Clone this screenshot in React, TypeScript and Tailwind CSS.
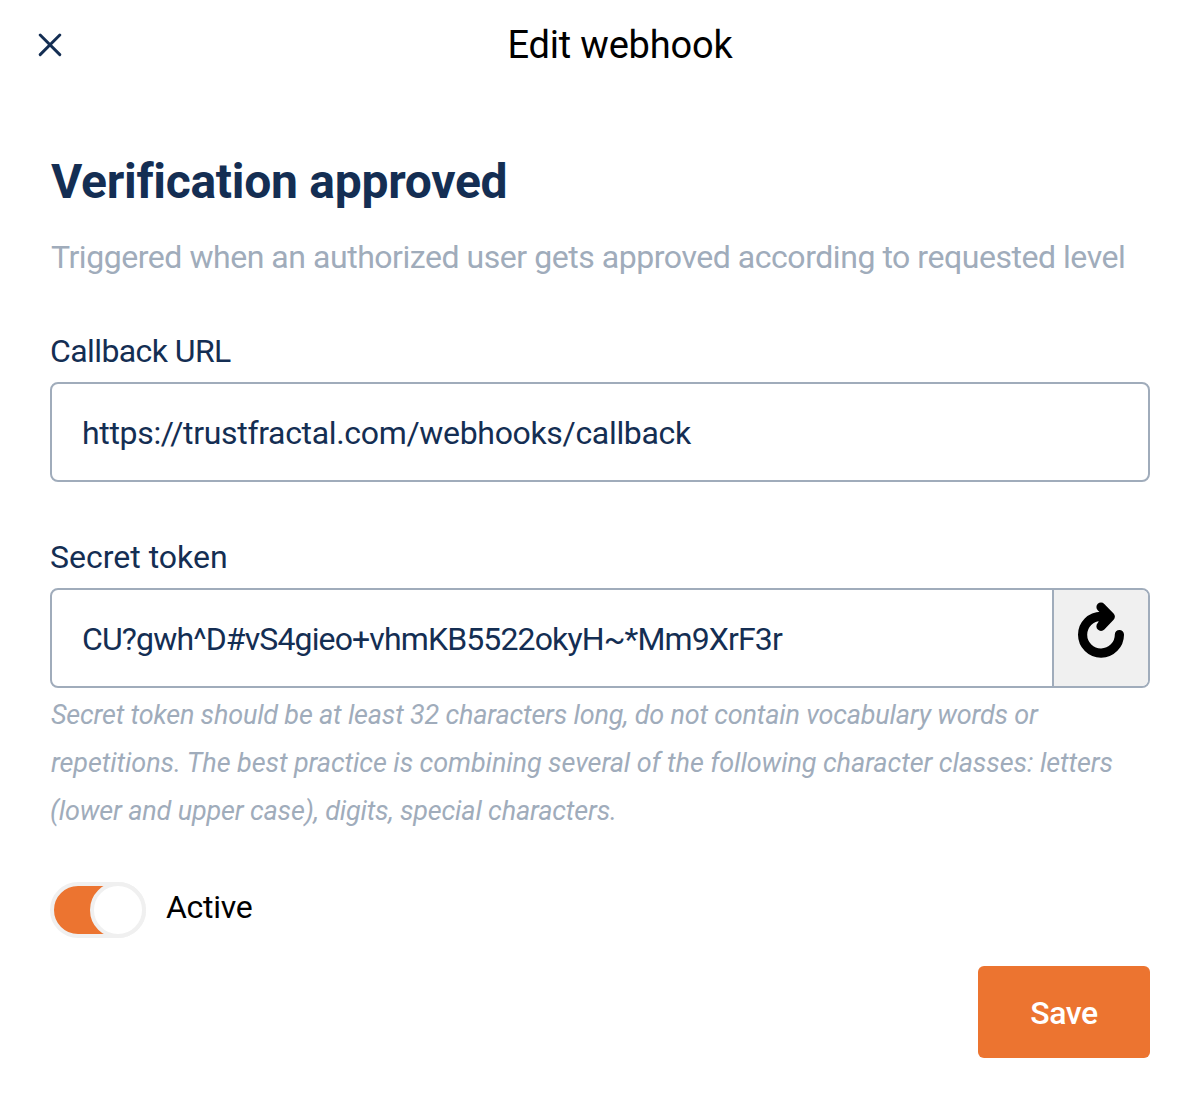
import { useState } from 'react';

function CloseIcon() {
  return (
    <svg viewBox="0 0 24 24" className="size-6" fill="none" stroke="currentColor" strokeWidth="2.9" strokeLinecap="round">
      <path d="M2.2 2 21.8 21.6M21.8 2 2.2 21.6" />
    </svg>
  );
}

function RefreshIcon() {
  return (
    <svg viewBox="0 0 46 56" className="h-14 w-[46px]" fill="none" stroke="black" strokeWidth="9.2" strokeLinecap="round" strokeLinejoin="round">
      <path d="M41.4 32.5A18.4 18.4 0 1 1 23 14.3H31" />
      <path d="M23 5.1 32.3 14.6 23 24.3" />
      <path d="M22 14.5H30L22 22Z" fill="black" strokeWidth="3" />
    </svg>
  );
}

export default function App() {
  const [url, setUrl] = useState('https://trustfractal.com/webhooks/callback');
  const [token, setToken] = useState('CU?gwh^D#vS4gieo+vhmKB5522okyH~*Mm9XrF3r');
  const [active, setActive] = useState(true);

  return (
    <div className="h-[1102px] w-[1194px] overflow-hidden bg-white font-['Roboto',sans-serif] text-[32px] text-[#142E53]">
      <header className="flex h-[90px] items-center pr-4 pl-[38px]">
        <button aria-label="Close">
          <CloseIcon />
        </button>
        <h1 className="flex-1 text-center text-[38px] leading-[48px] tracking-[-0.2px] text-black">Edit webhook</h1>
      </header>

      <main className="flex flex-col pt-[62px] pr-11 pl-[50px]">
        <h2 className="pl-px text-[48px] leading-[60px] font-bold tracking-[-0.28px]">Verification approved</h2>
        <p className="mt-[21px] pl-px leading-[48px] tracking-[-0.456px] whitespace-nowrap text-[#A0ACBB]">
          Triggered when an authorized user gets approved according to requested level
        </p>

        <label htmlFor="url" className="mt-[50px] leading-10 tracking-[-0.595px]">Callback URL</label>
        <input
          id="url"
          value={url}
          onChange={(e) => setUrl(e.target.value)}
          className="mt-[11px] h-[100px] rounded-lg border-2 border-[#A0ACBB] px-[30px] pt-[2px] tracking-[-0.327px] outline-none"
        />

        <label htmlFor="token" className="mt-[55px] leading-10 tracking-[0px]">Secret token</label>
        <div className="mt-[11px] flex h-[100px] overflow-hidden rounded-lg border-2 border-[#A0ACBB]">
          <input
            id="token"
            value={token}
            onChange={(e) => setToken(e.target.value)}
            className="min-w-0 flex-1 px-[30px] pt-[2px] tracking-[-0.865px] outline-none"
          />
          <button aria-label="Generate token" className="flex w-24 items-start justify-center border-l-2 border-[#A0ACBB] bg-[#F0F0F0] pt-[12px]">
            <RefreshIcon />
          </button>
        </div>
        <p className="mt-[3px] pl-px text-[27px] leading-[48px] whitespace-nowrap text-[#A0ACBB] italic">
          <span className="block tracking-[-0.19px]">Secret token should be at least 32 characters long, do not contain vocabulary words or</span>
          <span className="block tracking-[-0.084px]">repetitions. The best practice is combining several of the following character classes: letters</span>
          <span className="-ml-px block tracking-[-0.16px]">(lower and upper case), digits, special characters.</span>
        </p>

        <div className="mt-[47px] flex h-14 items-center">
          <button
            role="switch"
            aria-checked={active}
            aria-label="Active"
            onClick={() => setActive(!active)}
            className="flex h-14 w-24 justify-end rounded-full border-4 border-[#F0F0F0] bg-[#EC7430]"
          >
            <span className="-my-1 -mr-1 size-14 shrink-0 rounded-full border-4 border-[#F0F0F0] bg-white" />
          </button>
          <span className="mb-[6px] ml-5 leading-10 tracking-[-0.3px] text-black">Active</span>
        </div>

        <button className="mt-7 h-[92px] w-[172px] self-end rounded-md bg-[#EC7430] pt-px font-medium tracking-[-0.4px] text-white">
          Save
        </button>
      </main>
    </div>
  );
}
